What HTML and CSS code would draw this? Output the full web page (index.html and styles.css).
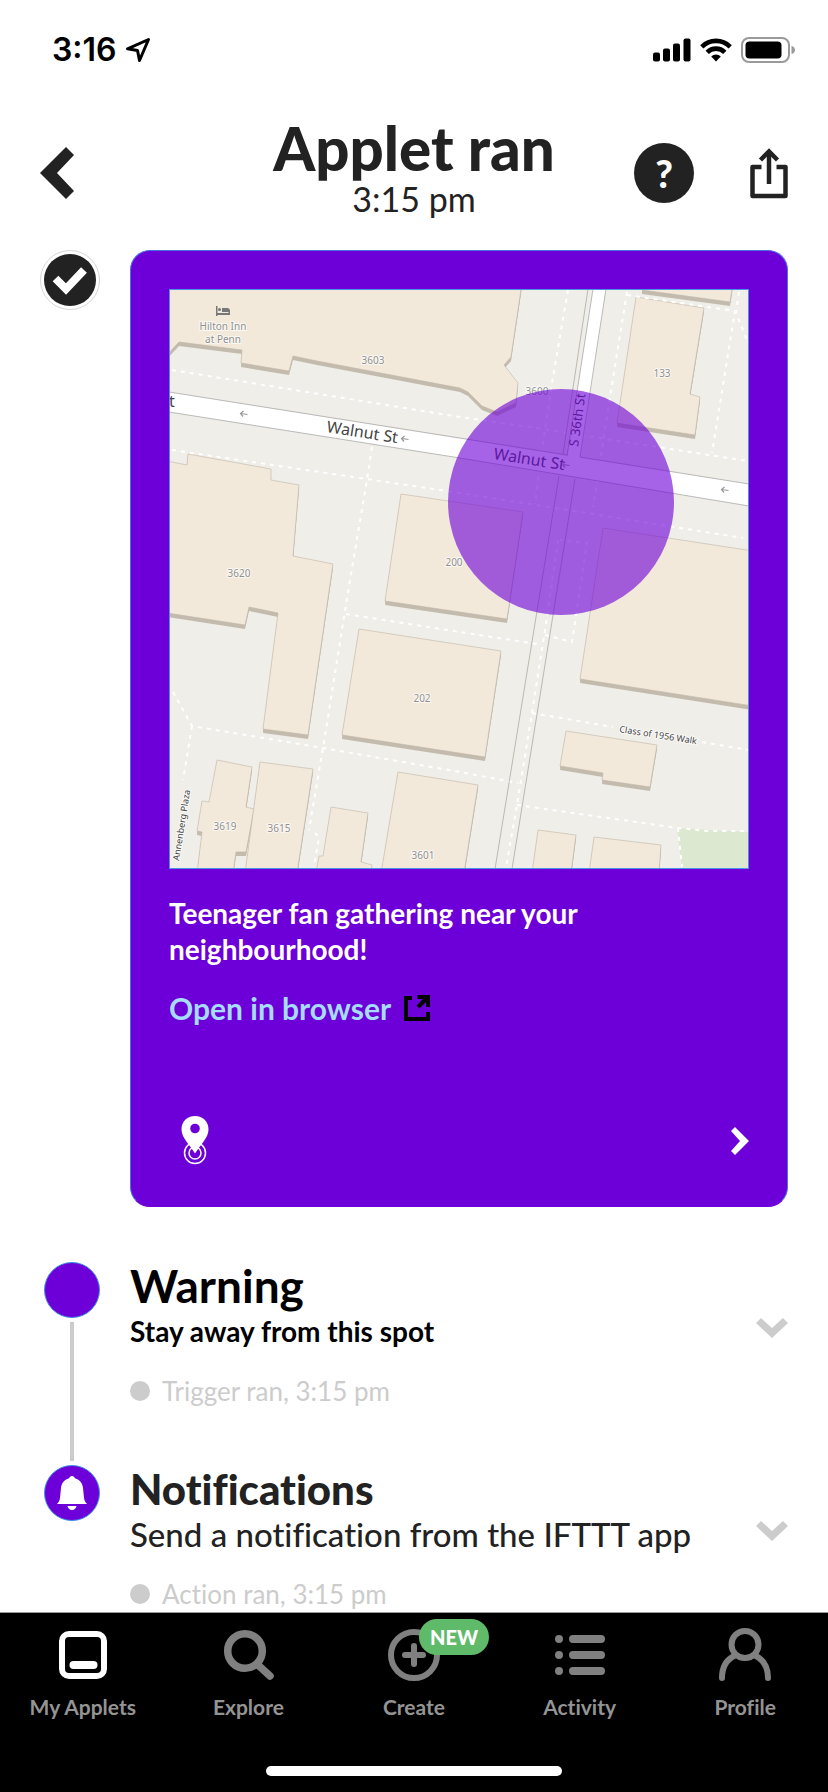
FILE: index.html
```html
<!DOCTYPE html>
<html lang="en">
<head>
<meta charset="utf-8">
<meta name="viewport" content="width=device-width, initial-scale=1">
<title>Applet ran</title>
<link rel="stylesheet" href="styles.css">
</head>
<body class="screen">
<div class="status">
  <div class="status__left">
    <span class="status__time">3:16</span>
    <svg width="26" height="26" viewBox="0 0 26 26" fill="none" stroke="#000" stroke-width="3" stroke-linejoin="round"><path d="M23.500 2.500 14.500 23.500 12.500 13.500 2.500 11.800Z"/></svg>
  </div>
  <div class="status__right">
    <svg width="38" height="24" viewBox="0 0 38 24"><rect x="0" y="14.500" width="7" height="9" rx="2"/><rect x="10" y="10.500" width="7" height="13" rx="2"/><rect x="20" y="5.500" width="7" height="18" rx="2"/><rect x="30.500" y="0.500" width="7" height="23" rx="2"/></svg>
    <svg width="32" height="24" viewBox="0 0 32 24" fill="none" stroke="#000" stroke-width="4.600"><path d="M1.800 8.800a20 20 0 0 1 28.400 0"/><path d="M7.200 14.300a12.400 12.400 0 0 1 17.600 0"/><path d="M16 23.500l-4.800-4.900a6.800 6.800 0 0 1 9.600 0Z" fill="#000" stroke="none"/></svg>
    <svg width="55" height="26" viewBox="0 0 55 26"><rect x="1" y="1" width="47" height="24" rx="7" fill="none" stroke="#9a9a9a" stroke-width="2"/><rect x="4.500" y="4.500" width="36" height="17" rx="4"/><path d="M50.500 9v8c2.400-.6 3.500-2.100 3.500-4s-1.100-3.400-3.500-4Z" fill="#9a9a9a"/></svg>
  </div>
</div>

<header class="header">
  <button class="icon-button header__back" aria-label="Back">
    <svg width="34" height="52" viewBox="0 0 34 52"><path d="M26 0 34 8 17 26 34 44 26 52 0 26Z" fill="#222"/></svg>
  </button>
  <div class="header__titles">
    <h1 class="header__title">Applet ran</h1>
    <p class="header__time">3:15 pm</p>
  </div>
  <div class="header__actions">
    <button class="icon-button help" aria-label="Help">?</button>
    <button class="icon-button" aria-label="Share">
      <svg width="38" height="60" viewBox="0 0 38 60" fill="none" stroke="#222" stroke-width="4.500" stroke-linejoin="round"><path d="M11.500 24H2.500v29h33V24h-9"/><path d="M19 41V9"/><path d="M10.500 17 19 8.500 27.500 17" stroke-linejoin="miter"/></svg>
    </button>
  </div>
</header>

<main class="content">
  <section class="run">
    <span class="run__check">
      <svg width="60" height="60" viewBox="0 0 60 60"><circle cx="30" cy="30" r="29.500" fill="#fff" stroke="#ccc" stroke-width=".8"/><circle cx="30" cy="30" r="26" fill="#222"/><path d="M15.500 28.500 26 39 44 20" fill="none" stroke="#fff" stroke-width="8"/></svg>
    </span>
    <article class="card">
      <svg class="card__map" viewBox="0 0 580 580" role="img" aria-label="Map around Walnut St and S 36th St">
        <defs>
          <g id="buildings">
            <path d="M-2 66 10 53 73 61 72 74 120 82 124 67 148 72 291 99 299 103 313 117 328 123 347 114 349 94 335 76 342 68 353-6H-2Z"/>
            <path d="M467 8 535 19 521 105 531 108 526 146 448 134Z"/>
            <path d="M473 1 561 13 564-6H473Z"/>
            <path d="M-2 172 18 176 19 165 102 180 102 191 130 196 124 267 164 275 139 446 94 440 109 324 80 318 76 336-2 324Z"/>
            <path d="M232 205 354 223 338 330 216 312Z"/>
            <path d="M190 340 332 362 316 468 173 446Z"/>
            <path d="M434 239 584 262V417L411 390Z"/>
            <path d="M397 442 488 456 481 498 433 491 434 484 391 477Z"/>
            <path d="M48 471 83 478 77 518 85 520 77 563 67 563 64 584H28L33 543 28 542 33 512 40 513Z"/>
            <path d="M91 473 144 480 128 584H76Z"/>
            <path d="M162 518 199 524 192 573 203 576 202 584H147L150 567 154 567Z"/>
            <path d="M229 483 309 496 295 584H212Z"/>
            <path d="M369 541 407 546 402 584H363Z"/>
            <path d="M425 548 492 556 490 584H420Z"/>
          </g>
        </defs>
        <rect width="580" height="580" fill="#f0eee8"/>
        <path d="M508 539 580 543V580H513Z" fill="#dce8d0"/>
        <use href="#buildings" y="4" fill="#c3bbae"/>
        <use href="#buildings" y="2" fill="#c3bbae"/>
        <use href="#buildings" fill="#f3e9db" stroke="#bfb6a8" stroke-width=".6"/>
        <g class="map-path">
          <path d="M3 81 291 128 374 140 424 148 579 172"/>
          <path d="M3 161 278 202 361 215 574 249"/>
          <path d="M203 158 198 191 181 291 154 459 140 541M146 544 150 548 145 578"/>
          <path d="M177 325 291 343 368 355"/>
          <path d="M4 403 23 437 154 459 291 483 349 494M23 437 14 491"/>
          <path d="M389 251 378 328 363 424 348 516 337 578"/>
          <path d="M376 346 403 353 418 254 391 251"/>
          <path d="M363 424 444 438M533 453 579 461"/>
          <path d="M348 516 509 539 538 542 579 542M509 539 513 578"/>
          <path d="M399 1 384 88 376 141 366 215"/>
          <path d="M458 3 441 108 424 218"/>
          <path d="M458 6 566 22 543 164M570 3 567 24 578 51"/>
        </g>
        <g class="map-road-line">
          <path d="M419 0 394 165M390 187 326 580M406 190 343 580"/>
        </g>
        <path d="M424 0 398 170 411 172 437 0Z" fill="#fff"/>
        <path d="M424 0 398 167M437 0 411 168" fill="none" stroke="#aaa" stroke-width=".8"/>
        <path d="M0 103 398 167 580 195V217L291 169 0 123Z" fill="#fff"/>
        <path d="M0 103 398 166M411 168 580 195M580 217 291 169 0 123" fill="none" stroke="#aaa" stroke-width=".8"/>
        <g fill="none" stroke="#999" stroke-width="1.200">
          <path id="oneway" d="M78.500 125.500 72 124.500M74.500 122 71.500 124.500 74 127.500"/>
          <use href="#oneway" x="161" y="25"/><use href="#oneway" x="322" y="51"/><use href="#oneway" x="481" y="76"/>
        </g>
        <g fill="#777"><path d="M47 17h1.500v7H60v2H48.500v1H47Z"/><circle cx="50.500" cy="20.500" r="1.500"/><path d="M53 19h5q3 0 3 3v4h-1.500v-3H53Z"/></g>
        <g class="map-label">
          <text x="54" y="41">Hilton Inn</text><text x="54" y="54">at Penn</text>
          <text x="204" y="75">3603</text><text x="368" y="106">3600</text><text x="493" y="88">133</text>
          <text x="70" y="288">3620</text><text x="285" y="277">200</text><text x="253" y="413">202</text>
          <text x="56" y="541">3619</text><text x="110" y="543">3615</text><text x="254" y="570">3601</text>
        </g>
        <g class="map-street">
          <text x="0" y="118">t</text>
          <text transform="translate(157 143) rotate(9)">Walnut St</text>
          <text transform="translate(324 170) rotate(9)">Walnut St</text>
          <text class="map-street--minor" transform="translate(409 158) rotate(-82)">S 36th St</text>
          <text class="map-street--walk" transform="translate(450 443) rotate(9)">Class of 1956 Walk</text>
          <text class="map-street--walk" transform="translate(10 572) rotate(-81)">Annenberg Plaza</text>
        </g>
        <circle cx="392" cy="213" r="113" fill="#6d00d8" fill-opacity=".61"/>
        <rect x=".5" y=".5" width="579" height="579" fill="none" stroke="#4b8fe6"/>
      </svg>
      <p class="card__text">Teenager fan gathering near your neighbourhood!</p>
      <a class="card__link" href="#">Open in browser
        <svg width="28" height="28" viewBox="0 0 28 28" fill="none" stroke="#000" stroke-width="4"><path d="M9 4H3V25H25V18"/><path d="M15 13 23 5"/><path d="M14.500 3H25V13"/></svg>
      </a>
      <div class="card__footer">
        <svg width="28" height="50" viewBox="0 0 28 50"><g fill="none" stroke="#fff" stroke-width="1.500"><circle cx="14" cy="37" r="10.500"/><circle cx="14" cy="37" r="6"/></g><path d="M14 0C6 0 .5 5.500 .5 13.500.5 22 9 29 14 37.500 19 29 27.500 22 27.500 13.500 27.500 5.500 22 0 14 0Z" fill="#fff"/><circle cx="14" cy="12.500" r="4.800" fill="#6d00d8"/></svg>
        <button class="icon-button" aria-label="Open details"><svg width="18" height="28" viewBox="0 0 18 28"><path d="M4 0 18 14 4 28 0 24 9 14 0 4Z" fill="#fff"/></svg></button>
      </div>
    </article>
  </section>

  <section class="steps">
    <article class="step">
      <div class="step__rail"><span class="step__icon"></span><span class="step__line"></span></div>
      <div class="step__body step__body--spaced">
        <h2 class="step__title step__title--alert">Warning</h2>
        <p class="step__text step__text--alert">Stay away from this spot</p>
        <p class="step__meta"><span class="step__dot"></span>Trigger ran, 3:15 pm</p>
      </div>
      <button class="icon-button step__toggle" aria-label="Expand Warning"><svg width="32" height="20" viewBox="0 0 32 20"><path d="M5 0 16 10 27 0 32 5 16 20 0 5Z" fill="#ccc"/></svg></button>
    </article>
    <article class="step">
      <div class="step__rail"><span class="step__icon"><svg width="30" height="34" viewBox="0 0 30 34" fill="#fff"><path d="M15 0c1.500 0 2.500 1 3 2.300 5 1.500 7.500 5 8 9.700L27 22c.3 2.500 1.500 4.500 3 6H0c1.500-1.500 2.700-3.500 3-6L4 12c.5-4.700 3-8.200 8-9.700C12.500 1 13.500 0 15 0Z"/><path d="M10.500 30h9c-.3 2.300-2 4-4.500 4s-4.200-1.700-4.500-4Z"/></svg></span></div>
      <div class="step__body">
        <h2 class="step__title">Notifications</h2>
        <p class="step__text">Send a notification from the IFTTT app</p>
        <p class="step__meta"><span class="step__dot"></span>Action ran, 3:15 pm</p>
      </div>
      <button class="icon-button step__toggle" aria-label="Expand Notifications"><svg width="32" height="20" viewBox="0 0 32 20"><path d="M5 0 16 10 27 0 32 5 16 20 0 5Z" fill="#ccc"/></svg></button>
    </article>
  </section>
</main>

<footer class="dock">
  <nav class="tabs">
    <a class="tab tab--current" href="#"><svg width="54" height="54" viewBox="0 0 54 54" fill="none" stroke="#fff" stroke-linecap="round"><rect x="6" y="6" width="42" height="42" rx="7" stroke-width="6"/><path d="M17.500 37H37.500" stroke-width="8"/></svg>My Applets</a>
    <a class="tab" href="#"><svg width="54" height="54" viewBox="0 0 54 54" fill="none" stroke="#808080" stroke-linecap="round"><circle cx="24" cy="23" r="17.300" stroke-width="7.500"/><path d="M36.500 36.500 49 48" stroke-width="7.500"/></svg>Explore</a>
    <a class="tab" href="#"><svg width="54" height="54" viewBox="0 0 54 54" fill="none" stroke="#808080" stroke-linecap="round"><circle cx="27" cy="27" r="23" stroke-width="6"/><path d="M18 27H36M27 18V36" stroke-width="6"/></svg><span class="tab__badge">NEW</span>Create</a>
    <a class="tab" href="#"><svg width="54" height="54" viewBox="0 0 54 54" fill="none" stroke="#808080" stroke-width="8" stroke-linecap="round"><path d="M6 11h.01M6 27h.01M6 43h.01M20 11H48M20 27H48M20 43H48"/></svg>Activity</a>
    <a class="tab" href="#"><svg width="54" height="54" viewBox="0 0 54 54" fill="none" stroke="#808080" stroke-width="6" stroke-linecap="round"><circle cx="27" cy="16.500" r="13.500"/><path d="M4 50C4 39.500 8.500 31.500 17 27.500M50 50C50 39.500 45.500 31.500 37 27.500"/></svg>Profile</a>
  </nav>
  <span class="dock__handle"></span>
</footer>
</body>
</html>
```
FILE: styles.css
```css
* { box-sizing: border-box; }

.screen {
  margin: 0;
  min-height: 100vh;
  display: flex;
  flex-direction: column;
  background: #fff;
  color: #222;
  font-family: Lato, "Open Sans", sans-serif;
  font-variant-ligatures: none;
}

h1, h2, p { margin: 0; }
svg { display: block; flex: none; }

.icon-button {
  border: 0;
  padding: 0;
  background: none;
  font: inherit;
  color: inherit;
}

.status {
  display: flex;
  justify-content: space-between;
  align-items: center;
  padding: 32px 32px 0 52px;
  color: #000;
}
.status__left { display: flex; align-items: center; gap: 8px; }
.status__right { display: flex; align-items: center; gap: 9px; }
.status__time {
  font: 600 32px/36px Inter, sans-serif;
}

.header {
  display: grid;
  grid-template-columns: 1fr auto 1fr;
  align-items: end;
  padding: 48px 40px 0;
}
.header__back { justify-self: start; padding-bottom: 19px; }
.header__titles { text-align: center; }
.header__title { font-size: 60px; line-height: 64px; font-weight: 900; }
.header__time { font-size: 34px; line-height: 38px; }
.header__actions {
  justify-self: end;
  display: flex;
  gap: 56px;
  padding-bottom: 15px;
}
.help {
  width: 60px;
  height: 60px;
  border-radius: 50%;
  background: #222;
  color: #fff;
  font-size: 38px;
  font-weight: 900;
}

.content { padding: 32px 40px 0; }

.run {
  display: grid;
  grid-template-columns: 60px 1fr;
  gap: 30px;
}
.card {
  padding: 38px;
  border: 1px solid #4b6fe6;
  border-bottom-color: #6d00d8;
  border-radius: 20px;
  background: #6d00d8;
  color: #fff;
}
.card__map { width: 100%; height: auto; }
.card__text {
  margin-top: 26px;
  font-size: 28px;
  line-height: 36px;
  font-weight: 700;
}
.card__link {
  display: flex;
  align-items: center;
  gap: 12px;
  margin-top: 23px;
  font-size: 30px;
  line-height: 36px;
  font-weight: 700;
  color: #a5dcff;
  text-decoration: none;
}
.card__footer {
  display: flex;
  justify-content: space-between;
  align-items: center;
  padding: 90px 0 2px 12px;
}

.map-path {
  fill: none;
  stroke: #fff;
  stroke-width: 2;
  stroke-dasharray: 4 5;
}
.map-road-line { fill: none; stroke: #bbb8b2; stroke-width: 1; }
.map-label, .map-street {
  font-family: "Noto Sans", sans-serif;
  paint-order: stroke;
  stroke: #fff;
  stroke-width: 2px;
  stroke-opacity: .7;
}
.map-label { font-size: 10px; text-anchor: middle; fill: #909090; }
.map-street { font-size: 16px; fill: #444; }
.map-street--minor { font-size: 13px; stroke: none; }
.map-street--walk { font-size: 9px; }

.steps { padding: 55px 0 2px 4px; }
.step {
  display: grid;
  grid-template-columns: 56px 1fr auto;
  column-gap: 30px;
}
.step__rail { display: flex; flex-direction: column; align-items: center; gap: 4px; }
.step__icon {
  width: 56px;
  height: 56px;
  display: grid;
  place-items: center;
  border: 1px solid #3f8fe6;
  border-radius: 50%;
  background: #6d00d8;
}
.step__line { flex: 1; width: 4px; margin-bottom: 4px; background: #ccc; }
.step__body--spaced { padding-bottom: 58px; }
.step__title { font-size: 42px; line-height: 48px; font-weight: 900; }
.step__title--alert { color: #000; font-size: 46px; font-weight: 700; }
.step__text { margin-top: 3px; font-size: 33px; line-height: 36px; font-weight: 500; }
.step__text--alert { color: #000; font-size: 28px; font-weight: 700; }
.step__meta {
  display: flex;
  align-items: center;
  gap: 12px;
  margin-top: 26px;
  font-size: 26px;
  line-height: 32px;
  color: #ccc;
}
.step__dot { width: 20px; height: 20px; border-radius: 50%; background: #ccc; }
.step__toggle { align-self: start; padding-top: 56px; }

.dock {
  flex: 1;
  display: flex;
  flex-direction: column;
  align-items: center;
  justify-content: space-between;
  padding-bottom: 16px;
  border-top: 1px solid #999;
  background: #000;
}
.tabs {
  width: 100%;
  display: grid;
  grid-template-columns: repeat(5, 1fr);
  padding-top: 15px;
}
.tab {
  position: relative;
  display: flex;
  flex-direction: column;
  align-items: center;
  gap: 13px;
  font-size: 21px;
  line-height: 24px;
  font-weight: 700;
  color: #949494;
  text-decoration: none;
}
.tab__badge {
  position: absolute;
  top: -9px;
  left: calc(50% + 5px);
  padding: 0 11px;
  border-radius: 18px;
  background: #5fba6a;
  color: #fff;
  font-size: 20px;
  line-height: 36px;
  font-weight: 900;
}
.dock__handle { width: 296px; height: 10px; border-radius: 5px; background: #fff; }
```
